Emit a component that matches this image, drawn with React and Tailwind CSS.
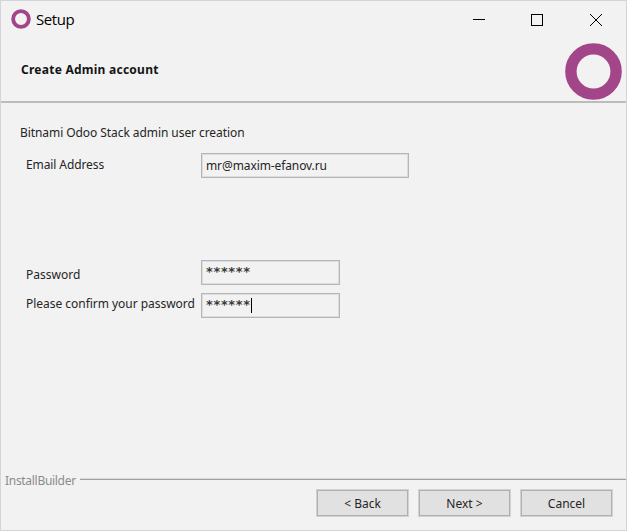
import React from "react";

function Ring({ className, radius, stroke }) {
  return (
    <svg className={className} viewBox="0 0 58 58" fill="none" aria-hidden="true">
      <circle cx="29" cy="29" r={radius} stroke="#a24689" strokeWidth={stroke} />
    </svg>
  );
}

function TitleBar() {
  return (
    <header className="flex h-[38px] items-center pl-[10px] pr-[24px]">
      <Ring className="mt-[-2px] size-5 shrink-0" radius="22.8" stroke="11" />
      <h1 className="-mt-[3px] ml-[5px] font-['Open_Sans',sans-serif] text-[15px] leading-5 tracking-[-0.4px] text-black">Setup</h1>
      <div className="-mt-[2px] ml-auto flex items-center">
        <svg className="mr-[46px] h-[13px] w-3" viewBox="0 0 12 13" shapeRendering="crispEdges">
          <path d="M0 6.5h12" stroke="#000" />
        </svg>
        <svg className="mr-[47px] h-[13px] w-3" viewBox="0 0 12 13" fill="none" shapeRendering="crispEdges">
          <rect x=".5" y="1.5" width="11" height="11" stroke="#000" />
        </svg>
        <svg className="h-[13px] w-3" viewBox="0 0 12 13" fill="none">
          <path d="M0 1l12 12M12 1L0 13" stroke="#000" />
        </svg>
      </div>
    </header>
  );
}

function Field({ label, labelClass, value, width, caret }) {
  return (
    <div className="flex h-[26px] items-center">
      <label className={`w-[175px] shrink-0 whitespace-nowrap ${labelClass}`}>{label}</label>
      <div className={`flex h-[25px] items-center border border-[#b5b6ba] pl-1 shadow-[inset_0_0_0_1px_#dddddd] ${width}`}>
        {value}
        {caret && <span className="h-[15px] w-px bg-black" />}
      </div>
    </div>
  );
}

function Button({ children }) {
  return (
    <button className="flex h-7 w-[93px] items-center justify-center border border-[#d2d2d2] bg-[#b0b0b0] p-px">
      <span className="flex h-full w-full items-center justify-center bg-[#e1e1e1] pt-px">{children}</span>
    </button>
  );
}

function Stars() {
  return <span className="font-['DejaVu_Sans',sans-serif] text-[13px] font-bold leading-4 tracking-[0.65px] text-[#3a3a3a]">******</span>;
}

export default function App() {
  return (
    <main className="flex h-[531px] w-[627px] flex-col overflow-hidden border border-[#d5d5d5] bg-[#f2f2f2] font-['Noto_Sans',sans-serif] text-[12px] leading-4 text-[#252525]">
      <TitleBar />
      <section className="flex h-[64px] shrink-0 items-start justify-between border-b-2 border-[#bcbcbc] pl-5 pr-1">
        <h2 className="mt-[23px] text-[12px] font-bold tracking-[0.25px] text-[#151515]">Create Admin account</h2>
        <Ring className="mt-1 size-[57px]" radius="23" stroke="11.6" />
      </section>
      <section className="flex h-[376px] shrink-0 flex-col pl-[25px]">
        <p className="-ml-[6px] mt-[22px] h-4 tracking-[-0.07px]">Bitnami Odoo Stack admin user creation</p>
        <div className="mt-[11px]">
          <Field label="Email Address" labelClass="tracking-[-0.1px]" value={<span className="mt-px tracking-[-0.1px]">mr@maxim-efanov.ru</span>} width="w-[208px]" />
        </div>
        <div className="mt-[81px] flex flex-col gap-[7px]">
          <Field label="Password" labelClass="mt-[5px]" value={<Stars />} width="w-[139px]" />
          <Field label="Please confirm your password" labelClass="-mt-[3px] tracking-[-0.03px]" value={<Stars />} width="w-[139px]" caret />
        </div>
      </section>
      <footer className="flex flex-1 flex-col">
        <div className="-mt-2 flex h-4 items-center pl-1 text-[#8b8b8b]">
          <span className="mt-1 w-[75px] shrink-0 tracking-[-0.3px]">InstallBuilder</span>
          <span className="h-0.5 flex-1 border-b border-t border-b-[#a0a0a0] border-t-[#dadada]" />
        </div>
        <div className="mt-[2px] flex justify-end gap-[9px] pr-[13px]">
          <Button>&lt; Back</Button>
          <Button>Next &gt;</Button>
          <Button>Cancel</Button>
        </div>
      </footer>
    </main>
  );
}
